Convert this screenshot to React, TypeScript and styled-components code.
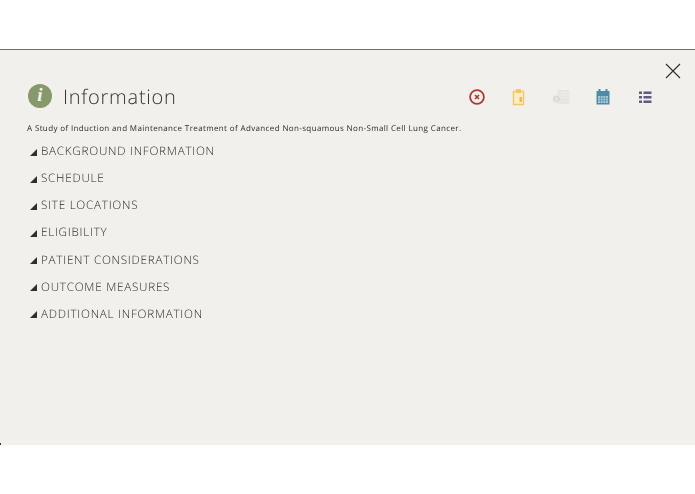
import React from "react";
import styled, { createGlobalStyle } from "styled-components";

const Global = createGlobalStyle`
  html, body { margin: 0; padding: 0; background: #fff; }
  body { font-family: "Open Sans", sans-serif; text-rendering: geometricPrecision; }
`;

const Page = styled.div`
  width: 695px;
  height: 494px;
  padding-top: 49px;
  box-sizing: border-box;
  overflow: hidden;
`;

const Panel = styled.section`
  position: relative;
  height: 396px;
  box-sizing: border-box;
  background: #f1f0ec;
  border-top: 1px solid #6f6f6b;
  padding: 34px 0 0 27px;
`;

const Close = styled.svg`
  position: absolute;
  top: 13px;
  right: 14px;
  width: 16px;
  height: 16px;
`;

const Corner = styled.span`
  position: absolute;
  left: 0;
  bottom: 0;
  width: 1px;
  height: 2px;
  background: #333;
`;

const Header = styled.header`
  display: flex;
  align-items: center;
  height: 25px;
`;

const InfoBadge = styled.span`
  flex: none;
  width: 24px;
  height: 24px;
  margin: -1px 0 0 1px;
  border-radius: 50%;
  background: #87986a;
  color: #f4f4ee;
  display: flex;
  align-items: center;
  justify-content: center;
  font: italic 700 19px/24px "Liberation Serif", serif;
`;

const Title = styled.h1`
  margin: 0 0 0 11px;
  font-weight: 300;
  font-size: 20px;
  line-height: 25px;
  letter-spacing: 0.75px;
  color: #333331;
  will-change: opacity;
`;

const Toolbar = styled.nav`
  margin-left: auto;
  margin-right: 41px;
  display: flex;
  align-items: center;
  gap: 24px;
`;

const Icon = styled.svg`
  display: block;
  width: 18px;
  height: 18px;
`;

const Summary = styled.p`
  margin: 14px 0 0;
  font-size: 8px;
  line-height: 12px;
  letter-spacing: 0.37px;
  color: #2b2b2b;
  white-space: nowrap;
  will-change: opacity;
`;

const List = styled.ul`
  list-style: none;
  margin: 2.6px 0 0 3px;
  padding: 0;
`;

const Row = styled.li`
  display: flex;
  align-items: center;
  height: 27.1px;
  font-weight: 300;
  font-size: 11.7px;
  letter-spacing: 0.74px;
  color: #2a2a28;
  will-change: opacity;
`;

const Arrow = styled.span`
  flex: none;
  width: 0;
  height: 0;
  margin: 2px 4px 0 0;
  border-style: solid;
  border-width: 0 0 7.5px 7.5px;
  border-color: transparent transparent #2f2f2d transparent;
`;

const items = [
  "BACKGROUND INFORMATION",
  "SCHEDULE",
  "SITE LOCATIONS",
  "ELIGIBILITY",
  "PATIENT CONSIDERATIONS",
  "OUTCOME MEASURES",
  "ADDITIONAL INFORMATION",
];

export default function App() {
  return (
    <Page>
      <Global />
      <Panel>
        <Close viewBox="0 0 16 16" aria-label="Close">
          <path d="M1 1 L15 15 M15 1 L1 15" stroke="#2e2e2c" strokeWidth="1.1" fill="none" />
        </Close>
        <Corner />
        <Header>
          <InfoBadge>i</InfoBadge>
          <Title>Information</Title>
          <Toolbar>
            <Icon viewBox="0 0 18 18">
              <circle cx="9" cy="9" r="6.9" fill="none" stroke="#b03a32" strokeWidth="1.8" />
              <path d="M7 7 L11 11 M11 7 L7 11" stroke="#b03a32" strokeWidth="1.7" />
            </Icon>
            <Icon viewBox="0 0 18 18">
              <path d="M3.5 3.5 H13.5 V16.5 H3.5 Z" fill="#fbeccb" stroke="#f3c765" strokeWidth="1.4" />
              <rect x="6" y="1" width="5" height="4" fill="#f3c765" />
              <rect x="9.5" y="9" width="2.5" height="5" fill="#f0bc4e" />
            </Icon>
            <Icon viewBox="0 0 18 18">
              <rect x="5.5" y="2" width="12" height="14" fill="#e6e5e2" />
              <path d="M9 4.5 H17.5 M9 7 H17.5 M10 9.5 H17.5" stroke="#f1f0ec" strokeWidth="0.7" />
              <circle cx="4.5" cy="11" r="4" fill="#d9d8d5" stroke="#f1f0ec" strokeWidth="0.8" />
              <path d="M6 9.5 H3.7 V11 H5.3 V12.5 H3" fill="none" stroke="#f1f0ec" strokeWidth="0.7" />
            </Icon>
            <Icon viewBox="0 0 18 18">
              <rect x="2.5" y="3" width="13" height="13.5" fill="#4f8ba6" />
              <rect x="4.5" y="1" width="2" height="4" fill="#4f8ba6" />
              <rect x="11.5" y="1" width="2" height="4" fill="#4f8ba6" />
              <path d="M4 8 H14 V15 H4 Z" fill="#a9cbd9" />
              <path d="M4 10.3 H14 M4 12.7 H14 M6.5 8 V15 M9 8 V15 M11.5 8 V15" stroke="#4f8ba6" strokeWidth="0.6" />
            </Icon>
            <Icon viewBox="0 0 18 18">
              <path d="M3 3.5 H6 V6 H3 Z M3 8 H6 V10.5 H3 Z M3 12.5 H6 V15 H3 Z M7.5 3.5 H15.5 V6 H7.5 Z M7.5 8 H15.5 V10.5 H7.5 Z M7.5 12.5 H15.5 V15 H7.5 Z" fill="#66597f" />
            </Icon>
          </Toolbar>
        </Header>
        <Summary>A Study of Induction and Maintenance Treatment of Advanced Non-squamous Non-Small Cell Lung Cancer.</Summary>
        <List>
          {items.map((t) => (
            <Row key={t}>
              <Arrow />
              {t}
            </Row>
          ))}
        </List>
      </Panel>
    </Page>
  );
}
